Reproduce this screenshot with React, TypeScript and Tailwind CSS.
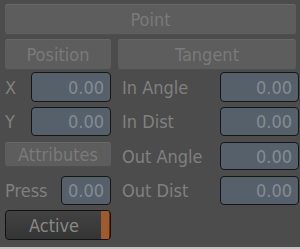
const font = { fontFamily: '"DejaVu Sans Condensed", "DejaVu Sans", sans-serif' };

const Btn = ({ label, className = '' }: { label: string; className?: string }) => (
  <div
    className={`flex items-center justify-center rounded-[3px] bg-[#5d5d5d] text-[18px] text-[#7a7a7a] shadow-[inset_0_1px_0_#686868,inset_0_-1px_0_#4f4f4f] ${className}`}
  >
    {label}
  </div>
);

const Field = ({ value, className = '' }: { value: string; className?: string }) => (
  <div
    className={`flex items-center justify-end rounded-[4px] border border-[#161616] bg-[#56606a] pr-[6px] text-[18px] text-[#848b92] ${className}`}
  >
    {value}
  </div>
);

const Row = ({
  left,
  right,
  h,
  mt,
}: {
  left: React.ReactNode;
  right: React.ReactNode;
  h: string;
  mt: string;
}) => (
  <div className={`flex ${h} ${mt}`}>
    <div className="flex w-[106px] items-stretch">{left}</div>
    <div className="ml-[11px] flex w-[177px] items-stretch">{right}</div>
  </div>
);

const Pair = ({ label, value, fw }: { label: string; value: string; fw: string }) => (
  <div className="flex w-full items-center justify-between">
    <span className="text-[18px] text-[#808080]">{label}</span>
    <Field value={value} className={`h-full ${fw}`} />
  </div>
);

export default function App() {
  return (
    <div className="h-[249px] w-[300px] bg-[#c4c4c4]" style={font}>
      <div className="h-[247px] w-[300px] bg-[#4c4c4c] pl-[5px] pt-[4px]">
        <Btn label="Point" className="h-[31px] w-[291px]" />
        <div className="mt-[4px] flex h-[31px]">
          <Btn label="Position" className="w-[106px]" />
          <Btn label="Tangent" className="ml-[7px] w-[178px]" />
        </div>
        <Row
          h="h-[30px]"
          mt="mt-[2px]"
          left={<Pair label="X" value="0.00" fw="w-[80px]" />}
          right={<Pair label="In Angle" value="0.00" fw="w-[79px]" />}
        />
        <Row
          h="h-[29px]"
          mt="mt-[5px]"
          left={<Pair label="Y" value="0.00" fw="w-[80px]" />}
          right={<Pair label="In Dist" value="0.00" fw="w-[79px]" />}
        />
        <div className="mt-[6px] flex h-[28px]">
          <div className="w-[106px]">
            <Btn label="Attributes" className="h-[25px] w-[106px]" />
          </div>
          <div className="ml-[11px] flex w-[177px]">
            <Pair label="Out Angle" value="0.00" fw="w-[79px]" />
          </div>
        </div>
        <Row
          h="h-[29px]"
          mt="mt-[6px]"
          left={<Pair label="Press" value="0.00" fw="w-[50px]" />}
          right={<Pair label="Out Dist" value="0.00" fw="w-[79px]" />}
        />
        <div className="relative mt-[5px] flex h-[30px] w-[106px] items-center justify-center overflow-hidden rounded-[4px] border border-[#121212] bg-gradient-to-b from-[#424242] to-[#353535] text-[18px] text-[#888888]">
          <span className="pr-[8px]">Active</span>
          <div className="absolute right-[1px] top-0 h-full w-[8px] bg-[#a35a28]" />
        </div>
      </div>
    </div>
  );
}
